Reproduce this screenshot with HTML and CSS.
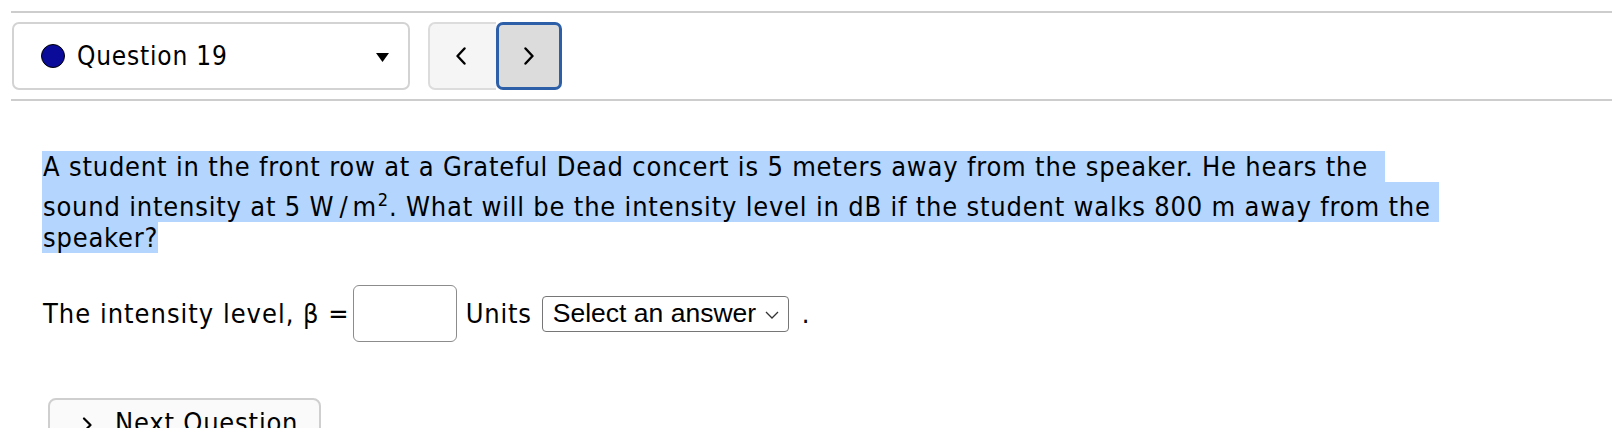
FILE: index.html
```html
<!DOCTYPE html>
<html>
<head>
<meta charset="utf-8">
<title>Question 19</title>
<link rel="stylesheet" href="styles.css">
</head>
<body>
<div class="page">
  <div class="rule"></div>
  <div class="qnav">
    <div class="qselect">
      <span class="dot"></span>
      <span class="qlabel">Question 19</span>
      <svg class="caret" width="13" height="9" viewBox="0 0 13 9"><polygon points="0,0 13,0 6.5,9" fill="#000"/></svg>
    </div>
    <div class="navbtns">
      <button class="nav prev" aria-label="Previous question">
        <svg width="12" height="18" viewBox="0 0 12 18"><path d="M9.5 1.5 L2.5 9 L9.5 16.5" fill="none" stroke="#000" stroke-width="2.4" stroke-linecap="round" stroke-linejoin="round"/></svg>
      </button>
      <button class="nav next" aria-label="Next question">
        <svg width="12" height="18" viewBox="0 0 12 18"><path d="M2.5 1.5 L9.5 9 L2.5 16.5" fill="none" stroke="#000" stroke-width="2.4" stroke-linecap="round" stroke-linejoin="round"/></svg>
      </button>
    </div>
  </div>
  <div class="rule rule-bottom"></div>

  <div class="question">
    <p class="qtext">
      <span class="ln ln1">A student in the front row at a Grateful Dead concert is 5 meters away from the speaker. He hears the&nbsp;&nbsp;</span>
      <span class="ln ln2">sound intensity at 5 W<span class="slash">/</span>m<sup>2</sup>. What will be the intensity level in dB if the student walks 800 m away from the&nbsp;</span>
      <span class="ln ln3">speaker?</span>
    </p>

    <div class="answer">
      <span class="lbl lbl-first">The intensity level, β =</span>
      <span class="numbox"></span>
      <span class="lbl">Units</span>
      <div class="units-select">
        <span class="opt">Select an answer</span>
        <svg width="14" height="8" viewBox="0 0 14 8"><path d="M1 1 L7 7 L13 1" fill="none" stroke="#333" stroke-width="1.3"/></svg>
      </div>
      <span class="lbl period">.</span>
    </div>

    <button class="nextq">
      <svg width="11" height="16" viewBox="0 0 11 16"><path d="M2 1.5 L8.5 8 L2 14.5" fill="none" stroke="#000" stroke-width="2.2" stroke-linecap="round" stroke-linejoin="round"/></svg>
      <span>Next Question</span>
    </button>
  </div>
</div>
</body>
</html>
```
FILE: styles.css
```css
html, body {
  margin: 0;
  padding: 0;
  background: #fff;
}

body {
  font-family: "DejaVu Sans Condensed", "DejaVu Sans", sans-serif;
  font-stretch: condensed;
  font-size: 27px;
  letter-spacing: 0.8px;
  color: #000;
  overflow: hidden;
}

.page {
  padding: 11px 0 0 11px;
}

.rule {
  height: 2px;
  background: #cdcdcd;
}

.rule-bottom {
  margin-top: 9px;
}

.qnav {
  display: flex;
  align-items: stretch;
  margin-top: 9px;
  height: 68px;
}

.qselect {
  box-sizing: border-box;
  width: 398px;
  margin-left: 1px;
  border: 2px solid #d3d3d3;
  border-radius: 7px;
  display: flex;
  align-items: center;
  padding-left: 27px;
  padding-right: 19px;
}

.dot {
  box-sizing: border-box;
  width: 24px;
  height: 24px;
  border-radius: 50%;
  background: #0b0b9a;
  border: 1.5px solid #000;
  flex: none;
}

.qlabel {
  margin-left: 12px;
  font-size: 26px;
}

.caret {
  margin-left: auto;
  margin-top: 2px;
}

.navbtns {
  display: flex;
  margin-left: 18px;
}

.nav {
  box-sizing: border-box;
  height: 68px;
  padding: 0;
  display: flex;
  align-items: center;
  justify-content: center;
  cursor: pointer;
}

.prev {
  width: 68px;
  background: #f5f5f5;
  border: 2px solid #dcdcdc;
  border-right: none;
  border-radius: 7px 0 0 7px;
  padding-right: 4px;
}

.next {
  width: 66px;
  background: #dcdcdc;
  border: 3px solid #2d5fa8;
  border-radius: 7px;
}

.question {
  padding-left: 31px;
}

.qtext {
  margin: 50px 0 0 0;
  line-height: 31px;
  white-space: nowrap;
}

.ln {
  display: block;
  width: fit-content;
  background: #b4d5fe;
  padding-left: 1px;
}

.ln2 {
  padding-top: 9px;
}

.slash {
  margin: 0 4px 0 5px;
}

sup {
  font-size: 18px;
  line-height: 0;
  vertical-align: super;
  margin-left: 1px;
}

.answer {
  display: flex;
  align-items: center;
  gap: 9px;
  margin-top: 32px;
  padding-left: 1px;
}

.lbl-first {
  letter-spacing: 1px;
  margin-right: -6px;
}

.numbox {
  box-sizing: border-box;
  width: 104px;
  height: 57px;
  border: 1.5px solid #8c8c8c;
  border-radius: 6px;
  background: #fff;
}

.units-select {
  box-sizing: border-box;
  width: 247px;
  height: 36px;
  margin-left: 1px;
  border: 1.5px solid #767676;
  border-radius: 4px;
  display: flex;
  align-items: center;
  padding: 0 9px 0 10px;
  font-family: "Liberation Sans", Arial, sans-serif;
  font-stretch: normal;
  font-size: 26.5px;
  letter-spacing: 0;
  color: #000;
}

.units-select svg {
  margin-left: auto;
  margin-top: 2px;
}

.period {
  margin-left: 4px;
}

.nextq {
  box-sizing: border-box;
  margin: 56px 0 0 6px;
  width: 273px;
  height: 56px;
  padding: 7px 0 0 32px;
  display: flex;
  align-items: flex-start;
  background: #fafafa;
  border: 2px solid #cfcfcf;
  border-radius: 8px;
  font: inherit;
  font-stretch: condensed;
  letter-spacing: 0.8px;
  color: #000;
}

.nextq svg {
  flex: none;
  margin-right: 22px;
  margin-top: 10px;
}
```
